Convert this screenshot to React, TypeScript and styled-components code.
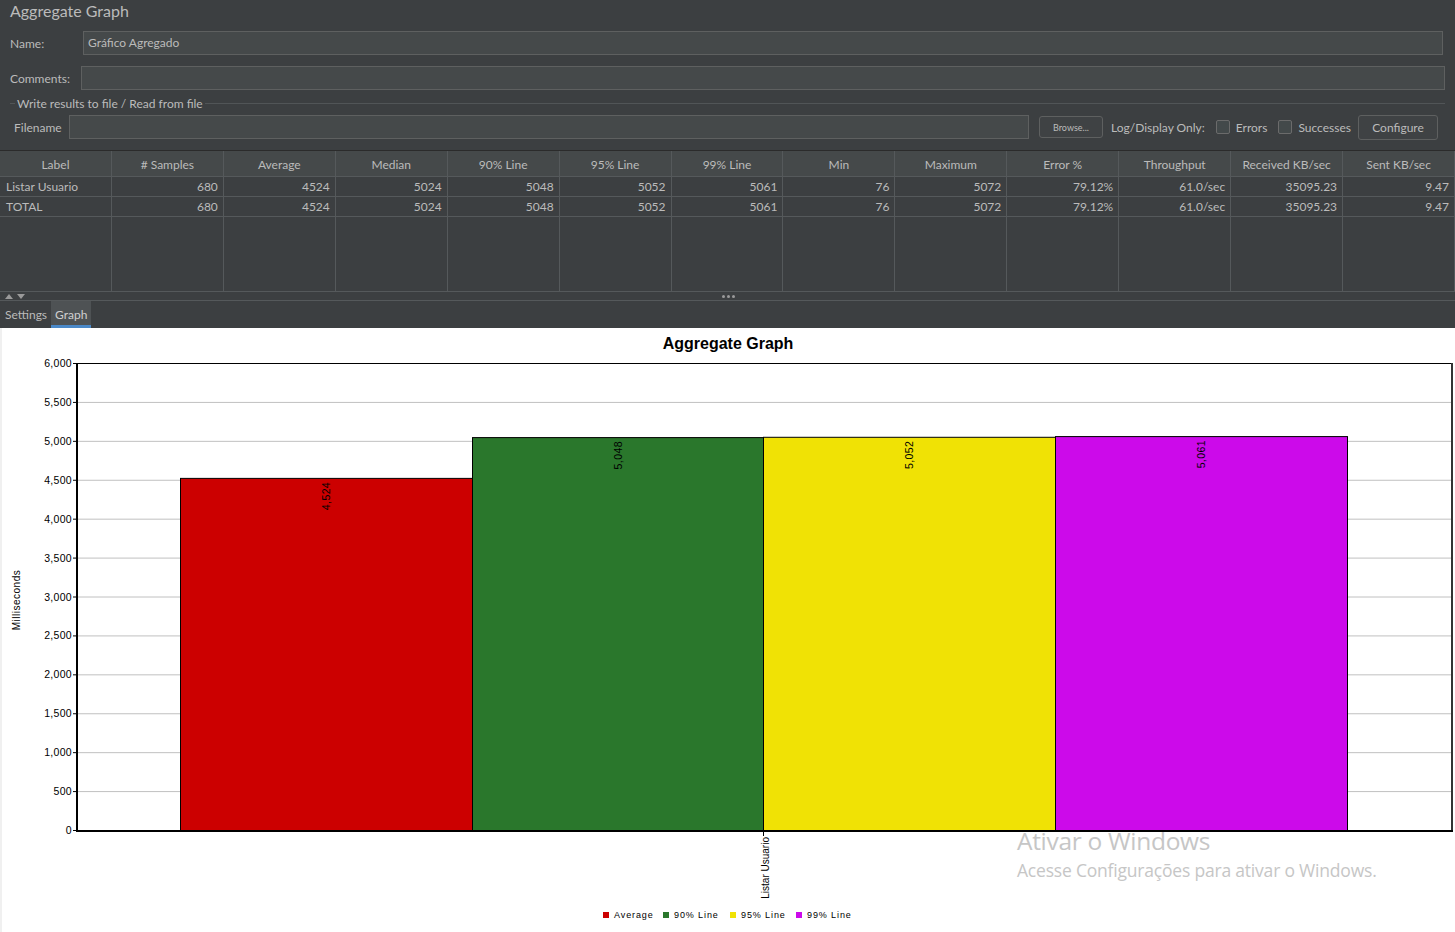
import React from "react";
import styled, { createGlobalStyle } from "styled-components";

const Global = createGlobalStyle`
  html, body { margin: 0; padding: 0; background: #3c3f41; }
  body { font-family: Lato, "Open Sans", sans-serif; overflow: hidden; }
  * { box-sizing: border-box; }
`;

const Page = styled.div`
  width: 1455px;
  height: 932px;
  display: flex;
  flex-direction: column;
  background: #3c3f41;
  color: #bbbbbb;
  font-size: 12px;
`;

const Title = styled.div`
  height: 22px;
  line-height: 22px;
  padding-left: 10px;
  font-size: 16px;
  color: #bbbbbb;
`;

const FormRow = styled.div<{ $top: number; $left: number; $right: number }>`
  display: flex;
  align-items: center;
  height: 24px;
  margin-top: ${(p) => p.$top}px;
  padding-left: ${(p) => p.$left}px;
  padding-right: ${(p) => p.$right}px;
`;

const Label = styled.span<{ $w: number }>`
  width: ${(p) => p.$w}px;
  flex: none;
  white-space: nowrap;
`;

const TextField = styled.div`
  flex: 1;
  height: 24px;
  background: #45494a;
  border: 1px solid #5e6060;
  padding-left: 4px;
  line-height: 22px;
  color: #bbbbbb;
`;

const Group = styled.div`
  display: flex;
  align-items: center;
  margin-top: 7px;
  padding-left: 10px;
  padding-right: 10px;
  height: 13px;
`;

const GroupLine = styled.div<{ $w?: number }>`
  height: 1px;
  background: #515557;
  ${(p) => (p.$w ? `width: ${p.$w}px;` : "flex: 1;")}
`;

const GroupTitle = styled.span`
  padding: 0 2px;
  line-height: 13px;
  white-space: nowrap;
`;

const Button = styled.div<{ $w: number; $h: number; $fs: number; $ml: number }>`
  flex: none;
  width: ${(p) => p.$w}px;
  height: ${(p) => p.$h}px;
  margin-left: ${(p) => p.$ml}px;
  border: 1px solid #5e6060;
  border-radius: 3px;
  background: #3f4244;
  display: flex;
  align-items: center;
  justify-content: center;
  font-size: ${(p) => p.$fs}px;
  color: #bbbbbb;
`;

const PlainText = styled.span<{ $ml: number }>`
  margin-left: ${(p) => p.$ml}px;
  white-space: nowrap;
  flex: none;
`;

const Check = styled.span<{ $ml: number }>`
  flex: none;
  width: 14px;
  height: 14px;
  margin-left: ${(p) => p.$ml}px;
  border: 1px solid #6b6b6b;
  border-radius: 2px;
  background: #43494a;
`;

const Table = styled.div`
  margin-top: 11px;
  height: 141px;
  border-top: 1px solid #2b2b2b;
  display: grid;
  grid-template-columns: repeat(13, 1fr);
  grid-template-rows: 26px 20px 20px 1fr;
`;

const HeadCell = styled.div`
  background: #45494a;
  border-right: 1px solid #55595b;
  border-bottom: 1px solid #55595b;
  display: flex;
  align-items: center;
  justify-content: center;
  white-space: nowrap;
  padding-top: 1px;
`;

const Cell = styled.div<{ $left?: boolean }>`
  border-right: 1px solid #55595b;
  border-bottom: 1px solid #55595b;
  display: flex;
  align-items: center;
  justify-content: ${(p) => (p.$left ? "flex-start" : "flex-end")};
  padding: 0 5px 0 6px;
  white-space: nowrap;
`;

const EmptyCell = styled.div`
  border-right: 1px solid #55595b;
`;

const Splitter = styled.div`
  height: 10px;
  border-top: 1px solid #55595b;
  border-bottom: 1px solid #55595b;
  display: flex;
  align-items: center;
  position: relative;
  padding-left: 5px;
`;

const Arrows = styled.div`
  display: flex;
  gap: 4px;
`;

const Dots = styled.div`
  position: absolute;
  left: 722px;
  top: 3px;
  display: flex;
  gap: 2px;
`;

const Dot = styled.span`
  width: 3px;
  height: 3px;
  border-radius: 50%;
  background: #9a9a9a;
`;

const Tabs = styled.div`
  height: 27px;
  display: flex;
  align-items: stretch;
  padding-left: 1px;
`;

const Tab = styled.div<{ $active?: boolean }>`
  padding: 0 4px;
  display: flex;
  align-items: center;
  font-size: 12px;
  background: ${(p) => (p.$active ? "#4e5254" : "transparent")};
  border-bottom: 3px solid ${(p) => (p.$active ? "#4a88c7" : "transparent")};
  padding-top: 3px;
  color: ${(p) => (p.$active ? "#d0d0d0" : "#bbbbbb")};
`;

const ChartPanel = styled.div`
  flex: 1;
  background: #ffffff;
  position: relative;
  border-left: 2px solid #f0f0f0;
`;

const ChartSvg = styled.svg`
  display: block;
  margin-left: -2px;
`;

const Watermark = styled.div`
  position: absolute;
  left: 1015px;
  top: 498px;
  color: #c6c6c6;
  font-family: "Open Sans", Lato, sans-serif;
  pointer-events: none;
`;

const WmTitle = styled.div`
  font-size: 24.5px;
  line-height: 30px;
  letter-spacing: -0.3px;
`;

const WmSub = styled.div`
  font-size: 17.5px;
  line-height: 24px;
  letter-spacing: -0.2px;
  margin-top: 2px;
`;

const headers = [
  "Label", "# Samples", "Average", "Median", "90% Line", "95% Line", "99% Line",
  "Min", "Maximum", "Error %", "Throughput", "Received KB/sec", "Sent KB/sec",
];
const rows = [
  ["Listar Usuario", "680", "4524", "5024", "5048", "5052", "5061", "76", "5072", "79.12%", "61.0/sec", "35095.23", "9.47"],
  ["TOTAL", "680", "4524", "5024", "5048", "5052", "5061", "76", "5072", "79.12%", "61.0/sec", "35095.23", "9.47"],
];

const PLOT_L = 77;
const PLOT_R = 1452;
const PLOT_T = 35;
const PLOT_B = 502;
const yOf = (v: number) => PLOT_B - (v * (PLOT_B - PLOT_T)) / 6000;

const bars = [
  { x0: 180, x1: 472, v: 4524, label: "4,524", color: "#cc0000" },
  { x0: 472, x1: 763, v: 5048, label: "5,048", color: "#2a772c" },
  { x0: 763, x1: 1055, v: 5052, label: "5,052", color: "#f0e205" },
  { x0: 1055, x1: 1347, v: 5061, label: "5,061", color: "#cc0aea" },
];

const legend = [
  { x: 603, label: "Average", color: "#cc0000" },
  { x: 663, label: "90% Line", color: "#2a772c" },
  { x: 730, label: "95% Line", color: "#f0e205" },
  { x: 796, label: "99% Line", color: "#cc0aea" },
];

const ticks = Array.from({ length: 13 }, (_, i) => i * 500);
const FONT = "'Liberation Sans', Arial, sans-serif";

function Chart() {
  return (
    <ChartSvg width={1455} height={604} viewBox="0 0 1455 604">
      <text x={728} y={21} textAnchor="middle" fontFamily={FONT} fontWeight="bold" fontSize={16} fill="#000">
        Aggregate Graph
      </text>
      {ticks.map((t) => (
        <g key={t}>
          {t > 0 && t < 6000 && (
            <line x1={PLOT_L} x2={PLOT_R} y1={yOf(t) + 0.5} y2={yOf(t) + 0.5} stroke="#c0c0c0" strokeWidth={1} />
          )}
          <line x1={73} x2={PLOT_L} y1={yOf(t) + 0.5} y2={yOf(t) + 0.5} stroke="#000" strokeWidth={1} />
          <text x={72} y={yOf(t) + 4} textAnchor="end" fontFamily={FONT} fontSize={10.5} letterSpacing={0.3} fill="#000">
            {t.toLocaleString("en-US")}
          </text>
        </g>
      ))}
      {bars.map((b) => (
        <g key={b.label}>
          <rect x={b.x0 + 0.5} y={yOf(b.v) + 0.5} width={b.x1 - b.x0} height={PLOT_B - yOf(b.v)} fill={b.color} stroke="#000" strokeWidth={1} />
          <text
            transform={`translate(${(b.x0 + b.x1) / 2 + 4}, ${yOf(b.v) + 4}) rotate(-90)`}
            textAnchor="end"
            fontFamily={FONT}
            fontSize={10.5}
            letterSpacing={0.4}
            fill="#000"
          >
            {b.label}
          </text>
        </g>
      ))}
      <line x1={PLOT_L} x2={PLOT_R} y1={PLOT_T + 0.5} y2={PLOT_T + 0.5} stroke="#000" strokeWidth={1} />
      <line x1={PLOT_R} x2={PLOT_R} y1={PLOT_T} y2={PLOT_B + 1} stroke="#333" strokeWidth={2} />
      <line x1={PLOT_L} x2={PLOT_L} y1={PLOT_T} y2={PLOT_B + 2} stroke="#000" strokeWidth={2} />
      <line x1={PLOT_L - 1} x2={PLOT_R + 1} y1={PLOT_B + 1} y2={PLOT_B + 1} stroke="#000" strokeWidth={2} />
      <line x1={763.5} x2={763.5} y1={PLOT_B + 2} y2={PLOT_B + 6} stroke="#000" strokeWidth={1} />
      <text
        transform={`translate(769, ${PLOT_B + 7}) rotate(-90)`}
        textAnchor="end"
        fontFamily={FONT}
        fontSize={10}
        fill="#000"
      >
        Listar Usuario
      </text>
      <text
        transform="translate(20, 272) rotate(-90)"
        textAnchor="middle"
        fontFamily={FONT}
        fontSize={10}
        letterSpacing={0.5}
        fill="#000"
      >
        Milliseconds
      </text>
      {legend.map((l) => (
        <g key={l.label}>
          <rect x={l.x} y={584} width={6} height={6} fill={l.color} />
          <text x={l.x + 11} y={590} fontFamily={FONT} fontSize={9} letterSpacing={0.9} fill="#000">
            {l.label}
          </text>
        </g>
      ))}
    </ChartSvg>
  );
}

function ArrowIcon({ up }: { up?: boolean }) {
  return (
    <svg width={8} height={5} viewBox="0 0 8 5">
      <polygon points={up ? "0,5 8,5 4,0" : "0,0 8,0 4,5"} fill="#9a9a9a" />
    </svg>
  );
}

export default function App() {
  return (
    <>
      <Global />
      <Page>
        <Title>Aggregate Graph</Title>
        <FormRow $top={9} $left={10} $right={12}>
          <Label $w={73}>Name:</Label>
          <TextField>Gráfico Agregado</TextField>
        </FormRow>
        <FormRow $top={11} $left={10} $right={10}>
          <Label $w={71}>Comments:</Label>
          <TextField />
        </FormRow>
        <Group>
          <GroupLine $w={5} />
          <GroupTitle>Write results to file / Read from file</GroupTitle>
          <GroupLine />
        </Group>
        <FormRow $top={5} $left={14} $right={17}>
          <Label $w={55}>Filename</Label>
          <TextField />
          <Button $w={64} $h={22} $fs={9} $ml={10}>Browse...</Button>
          <PlainText $ml={8}>Log/Display Only:</PlainText>
          <Check $ml={11} />
          <PlainText $ml={6}>Errors</PlainText>
          <Check $ml={11} />
          <PlainText $ml={6}>Successes</PlainText>
          <Button $w={80} $h={25} $fs={12} $ml={7}>Configure</Button>
        </FormRow>
        <Table>
          {headers.map((h) => (
            <HeadCell key={h}>{h}</HeadCell>
          ))}
          {rows.map((r, ri) =>
            r.map((c, ci) => (
              <Cell key={`${ri}-${ci}`} $left={ci === 0}>
                {c}
              </Cell>
            ))
          )}
          {headers.map((h) => (
            <EmptyCell key={`e-${h}`} />
          ))}
        </Table>
        <Splitter>
          <Arrows>
            <ArrowIcon up />
            <ArrowIcon />
          </Arrows>
          <Dots>
            <Dot />
            <Dot />
            <Dot />
          </Dots>
        </Splitter>
        <Tabs>
          <Tab>Settings</Tab>
          <Tab $active>Graph</Tab>
        </Tabs>
        <ChartPanel>
          <Chart />
          <Watermark>
            <WmTitle>Ativar o Windows</WmTitle>
            <WmSub>Acesse Configurações para ativar o Windows.</WmSub>
          </Watermark>
        </ChartPanel>
      </Page>
    </>
  );
}
